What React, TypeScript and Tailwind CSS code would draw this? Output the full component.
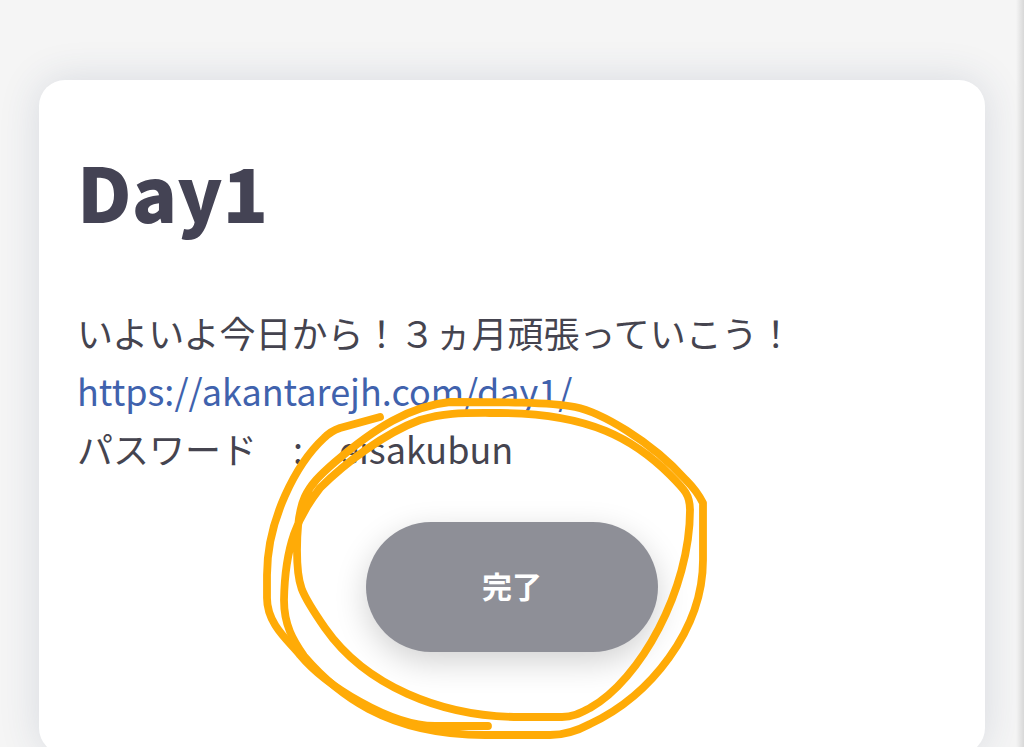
import { useState } from "react";

const lesson = {
  title: "Day1",
  message: "いよいよ今日から！３ヵ月頑張っていこう！",
  url: "https://akantarejh.com/day1/",
  password: "eisakubun",
};

// Hand-drawn double ring around the button
function MarkerCircle() {
  return (
    <svg
      aria-hidden="true"
      viewBox="256 392 460 355"
      className="pointer-events-none absolute -top-[130px] -left-[110px] h-[355px] w-[460px] max-w-none"
      fill="none"
      stroke="#ffab07"
      strokeWidth="7.8"
      strokeLinecap="round"
      strokeLinejoin="round"
    >
      <path d="M380 417L340 428C334 430 329 433 324 438C296 464 267 520 267 575V598C267 625 290 642 300 655C325 685 390 726 435 726H488" />
      <path d="M500 413C465 413 445 412 420 420C385 433 345 463 320 488C298 516 285 545 284 600C284 625 293 640 304 656C335 692 385 735 485 735H550C565 735 577 731 590 724C650 696 703 630 703 560V503C698 493 692 486 686 480C650 440 600 412 575 407C550 402 500 402 450 402C410 406 375 428 335 462C305 488 297 500 297 550C297 585 300 592 325 628C365 685 440 717 520 717H562C574 717 582 712 590 708C640 680 690 590 690 510C690 495 685 490 670 475C635 440 590 413 500 413" />
    </svg>
  );
}

export default function App() {
  const [done, setDone] = useState(false);

  return (
    <div className="relative h-screen overflow-hidden bg-[#f5f5f5] px-[39px] pt-20 font-['Noto_Sans_CJK_JP',sans-serif] text-[#45444f]">
      <main className="rounded-[26px] bg-white px-[38px] pt-14 pb-[102px] shadow-[0_0_40px_rgba(50,70,110,0.15)]">
        <h1 className="text-[75px] leading-[110px] font-black text-[#444354]">
          {lesson.title}
        </h1>

        <div className="mt-[57px] text-4xl leading-[58px]">
          <p>{lesson.message}</p>
          <p>
            <a href={lesson.url} className="text-[#4062ad]">
              {lesson.url}
            </a>
          </p>
          <p>パスワード　:　{lesson.password}</p>
        </div>

        <div className="mt-[45px] flex justify-center">
          <div className="relative">
            <button
              type="button"
              aria-pressed={done}
              onClick={() => setDone(!done)}
              className="h-[130px] w-[292px] rounded-full bg-[#8e8f97] pb-1 text-3xl font-bold text-white shadow-[0_10px_32px_rgba(0,0,0,0.18)]"
            >
              完了
            </button>
            <MarkerCircle />
          </div>
        </div>
      </main>

      {/* Shade along the right edge */}
      <div className="absolute inset-y-0 right-0 w-2 bg-linear-to-r from-transparent to-black/12" />
    </div>
  );
}
